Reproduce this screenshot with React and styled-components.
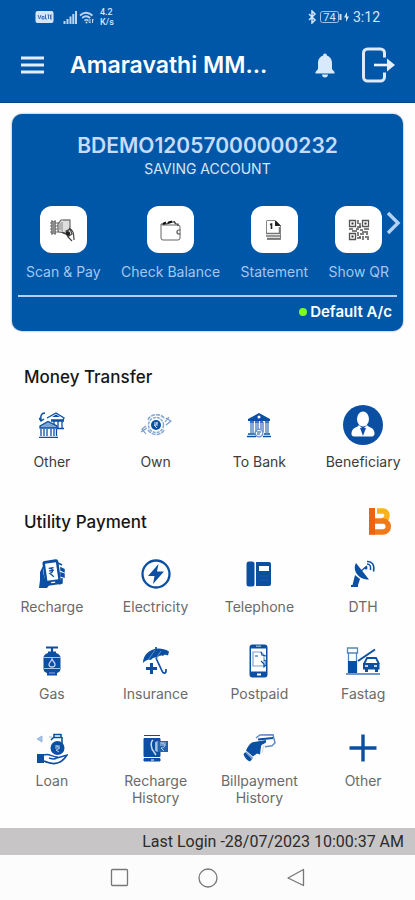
import React from "react";
import styled, { createGlobalStyle } from "styled-components";

const blue = "#0057a8";
const ink = "#0b4fa3";
const sans = `Inter, "Open Sans", sans-serif`;

const GlobalStyle = createGlobalStyle`
  * { box-sizing: border-box; }
  body { margin: 0; background: #fefefe; font-family: ${sans}; }
  button { font: inherit; color: inherit; background: none; border: 0; padding: 0; cursor: pointer; }
  svg { display: block; flex: none; }
`;

const Screen = styled.div`
  min-height: 100vh;
  display: flex;
  flex-direction: column;
`;

const TopArea = styled.header`
  background: ${blue};
  color: #fff;
  border-bottom: 1px solid #00448c;
`;

const StatusBar = styled.div`
  display: flex;
  align-items: center;
  justify-content: space-between;
  height: 34px;
  padding: 0 35px;
  font-family: Roboto, sans-serif;
  color: #d6e6fa;
`;

const StatusGroup = styled.div`
  display: flex;
  align-items: center;
  gap: ${(p) => p.$gap}px;
`;

const Speed = styled.span`
  font-size: 9px;
  line-height: 10px;
  font-weight: 500;
  margin-left: 4px;
`;

const Clock = styled.span`
  font-size: 14px;
  line-height: 16px;
`;

const AppBar = styled.div`
  display: flex;
  align-items: center;
  height: 68px;
  padding: 0 19px 6px 20px;
`;

const Title = styled.h1`
  flex: 1;
  margin: 0 0 0 25px;
  font-size: 23px;
  line-height: 28px;
  font-weight: 600;
  white-space: nowrap;
`;

const BarButton = styled.button`
  display: flex;
  margin-left: ${(p) => p.$gap || 0}px;
`;

const Main = styled.main`
  flex: 1;
  padding: 11px 0 20px;
`;

const Card = styled.section`
  margin: 0 12px;
  padding: 18px 6px 8px;
  border-radius: 10px;
  background: ${blue};
  color: #c5dcfa;
  box-shadow: 0 0 2px rgba(0, 50, 110, 0.6);
`;

const AccountNumber = styled.h2`
  margin: 0;
  text-align: center;
  font-size: 21px;
  line-height: 28px;
  font-weight: 600;
`;

const AccountType = styled.p`
  margin: 0;
  text-align: center;
  font-size: 14px;
  line-height: 18px;
  color: #d9e6fa;
`;

const ActionStrip = styled.div`
  position: relative;
  display: flex;
  justify-content: space-between;
  padding: 28px 8px 14px;
  border-bottom: 2px solid #b5d0f2;
`;

const Action = styled.button`
  display: flex;
  flex-direction: column;
  align-items: center;
  gap: 10px;
  font-size: 14px;
  line-height: 18px;
  white-space: nowrap;
  color: #a4c6f0;
`;

const ActionTile = styled.span`
  display: grid;
  place-items: center;
  width: 47px;
  height: 47px;
  border-radius: 12px;
  background: #fff;
`;

const NextButton = styled.button`
  position: absolute;
  right: -5px;
  top: 33px;
`;

const DefaultFlag = styled.p`
  display: flex;
  align-items: center;
  justify-content: flex-end;
  gap: 3px;
  margin: 4px 5px 0;
  font-size: 15px;
  line-height: 22px;
  font-weight: 600;
  color: #fff;
`;

const Dot = styled.span`
  width: 8px;
  height: 8px;
  border-radius: 50%;
  background: #7dff1c;
`;

const SectionHead = styled.div`
  display: flex;
  align-items: center;
  justify-content: space-between;
  height: 32px;
  padding: 0 23px 0 24px;
  margin-top: ${(p) => p.$top}px;
`;

const SectionTitle = styled.h3`
  margin: 0;
  font-size: 17px;
  line-height: 22px;
  font-weight: 500;
  color: #161616;
`;

const Grid = styled.div`
  display: grid;
  grid-template-columns: repeat(4, 1fr);
  row-gap: ${(p) => p.$rowGap}px;
  margin-top: ${(p) => p.$top}px;
`;

const Service = styled.button`
  display: flex;
  flex-direction: column;
  align-items: center;
  font-size: 14px;
  line-height: 17px;
  color: ${(p) => p.$color};
`;

const ServiceIcon = styled.span`
  display: grid;
  place-items: center;
  height: 40px;
  margin-bottom: ${(p) => p.$gap}px;
  color: ${ink};
`;

const LoginStrip = styled.footer`
  padding: 4px 11px 3px;
  background: #c7c5c6;
  color: #2b2b2b;
  text-align: right;
  font-family: Roboto, sans-serif;
  font-size: 16px;
  line-height: 20px;
`;

const NavBar = styled.nav`
  display: flex;
  justify-content: center;
  align-items: center;
  gap: 68px;
  height: 45px;
  background: #fcfcfc;
`;

const Svg = ({ w, h = w, children, ...rest }) => (
  <svg width={w} height={h} viewBox={`0 0 ${w} ${h}`} fill="none" aria-hidden="true" {...rest}>
    {children}
  </svg>
);

const VolteIcon = () => (
  <Svg w={19} h={12}>
    <rect x="0.5" width="18" height="12" rx="2" fill="#d6e6fa" />
    <path d="M3 4l1.5 4L6 4M7 5.5h2v2.5H7zM10.500 3.500v4.500h1.500M12.500 4h2M13.500 4v4M17 4h-1.500v4H17M15.500 6H17" stroke="#3f6fb4" />
  </Svg>
);
const SignalIcon = () => (
  <Svg w={14} h={13}>
    <path d="M1.500 10v3M4.500 8v5M7.500 5.500V13M10.300 3v10M13 0v13" stroke="#bdd5f3" strokeWidth="2" />
  </Svg>
);
const WifiIcon = () => (
  <Svg w={15} h={13}>
    <path d="M1 4.500Q7 -1 13.500 4.500M3.200 7Q7 3.500 11.200 7M5.500 9.500Q7.500 8 9.500 9.500" stroke="#bdd5f3" strokeWidth="1.700" />
    <path d="M11 8v4M9.500 10.500L11 12.200M13.500 12V8M15 9.500L13.500 8" stroke="#bdd5f3" />
    <circle cx="7.500" cy="11.500" r="1" fill="#bdd5f3" />
  </Svg>
);
const BluetoothIcon = () => (
  <Svg w={9} h={14}>
    <path d="M1 4l6 6-3 3V1l3 3-6 6" stroke="#d6e6fa" strokeWidth="1.500" />
  </Svg>
);
const BatteryIcon = () => (
  <Svg w={30} h={12}>
    <rect x="0.500" y="0.500" width="18" height="11" rx="2" stroke="#9fc0ea" />
    <path d="M20.500 3v6" stroke="#d6e6fa" strokeWidth="2" />
    <text x="9.500" y="10" textAnchor="middle" fontFamily="Roboto, sans-serif" fontSize="11" fill="#d6e6fa">74</text>
    <path d="M27 1l-3 5.500h2V11l3-5.500h-2z" fill="#d6e6fa" />
  </Svg>
);
const MenuIcon = () => (
  <Svg w={25} h={18}>
    <path d="M1 2h23M1 9h23M1 16h23" stroke="#e4eefb" strokeWidth="2.800" />
  </Svg>
);
const BellIcon = () => (
  <Svg w={22} h={26}>
    <path d="M11 1.500c1.200 0 1.800.8 1.800 2C16 4.500 18 7.500 18 11v6l2.500 3v1.500h-19V20L4 17v-6c0-3.500 2-6.500 5.200-7.500 0-1.200.6-2 1.800-2zM8 22.500h6c0 1.800-1.400 3-3 3s-3-1.200-3-3z" fill="#d8e9fb" />
  </Svg>
);
const LogoutIcon = () => (
  <Svg w={34} h={36}>
    <path d="M22.500 10.500V6a4 4 0 00-4-4h-13a4 4 0 00-4 4v24a4 4 0 004 4h13a4 4 0 004-4v-4.500" stroke="#dceafb" strokeWidth="3" />
    <path d="M12 18h15" stroke="#eef5fd" strokeWidth="2.600" />
    <path d="M25 11.500l8 6.500-8 6.500z" fill="#e6f0fc" />
  </Svg>
);
const ChevronIcon = () => (
  <Svg w={16} h={24}>
    <path d="M2 2l10 10L2 22" stroke="#b3d2f5" strokeWidth="3.400" />
  </Svg>
);

const ScanIcon = () => (
  <Svg w={26} h={24}>
    <path d="M1 3h5v13H1zM8 4v11" fill="#8c8c8c" stroke="#666" strokeDasharray="2 1" />
    <path d="M8 13V6l3-4h9v9l-4 4-7-1z" fill="#dedede" stroke="#666" strokeWidth="1.200" />
    <path d="M10 5v7M12 4v9M13 2h7" stroke="#888" />
    <path d="M12 14c3 3 6 1 6 5l4 4M19 10c4 2 5 5 5 12M16 13l4-2 2 5-3 2z" stroke="#444" strokeWidth="1.200" />
    <circle cx="18" cy="15.500" r="2.200" fill="#222" />
  </Svg>
);
const WalletIcon = () => (
  <Svg w={24} h={22}>
    <path d="M3 6h16a2 2 0 012 2v11a2 2 0 01-2 2H4a2 2 0 01-2-2V5" stroke="#666" />
    <path d="M2 5h6l2-2h5l2 2M15 2l2 3h2v2" stroke="#444" strokeWidth="1.200" />
    <path d="M4 5l3-1.500M9 4l4-1.500" stroke="#111" strokeWidth="2" />
    <path d="M21.500 11H20a2 2 0 000 4h1.500" stroke="#555" strokeWidth="1.200" />
  </Svg>
);
const StatementIcon = () => (
  <Svg w={18} h={22}>
    <path d="M1.500 1.500V14M2 1.500h8.500l5 5V20.500H2" stroke="#888" />
    <path d="M10 2v5h6L11 2z" fill="#222" />
    <path d="M5 5.500L6.500 5v5" stroke="#222" strokeWidth="1.600" />
    <path d="M14.500 8v7M1 14.500h14M1 17h15M2 19.500h14" stroke="#777" strokeWidth="1.500" />
  </Svg>
);
const QrIcon = () => (
  <Svg w={22}>
    <path d="M1.500 1.500h6v6h-6zM14.500 1.500h6v6h-6zM1.500 14.500h6v6h-6z" stroke="#555" strokeWidth="1.300" />
    <path d="M3.500 3.500h2v2h-2zM16.500 3.500h2v2h-2zM3.500 16.500h2v2h-2z" fill="#333" />
    <path d="M10 1v4M12 4v5M9 8h4M1 10h4M4 12h5M8 10h3M12 11h3M16 10h5M14 13h4M19 12v4M10 13v4M12 15h4M9 19h4M15 17v4M17 18h4M19 20h2M12 17v2" stroke="#555" strokeWidth="1.500" />
  </Svg>
);

const OtherBankIcon = () => (
  <Svg w={26}>
    <path d="M8 6l9-5 8 5-1 2H12M12 9h13M15 8v6M19 8v8M23 8v8M18 16.500h7" stroke={ink} strokeWidth="1.300" />
    <path d="M13 5l4-2.500L21 5z" fill={ink} />
    <path d="M1 14l8-4.500 9 4.500v2H1zM2 17v7M5 17v7M8 17v7M12 17v7M15 17v7M17.500 17v7M0 25.300h19" stroke={ink} strokeWidth="1.300" fill="#7ea5d5" />
    <path d="M6 1C2 1 1.500 4 2 8M0 6l2 3 3-2" stroke={ink} strokeWidth="1.500" />
  </Svg>
);
const OwnIcon = () => (
  <Svg w={32} h={22}>
    <circle cx="16" cy="11" r="5" fill={ink} />
    <circle cx="16" cy="11" r="7.500" stroke="#86a9d8" strokeWidth="1.500" strokeDasharray="3 1" />
    <path d="M8 6c3-7 13-7 17-1M8 16c4 6 13 6 16 0" stroke="#86a9d8" strokeWidth="1.600" strokeDasharray="4 1" />
    <path d="M26 4l5 3-5 4M29 3l-4 5M6 12l-4 3 4 5M7 14l-6 4" stroke="#7599cc" strokeWidth="1.200" />
    <path d="M14 9h4M14 11h4M17 8c0 4-3 3-3 3l3 3" stroke="#cfe0f5" />
  </Svg>
);
const BankIcon = () => (
  <Svg w={24} h={26}>
    <path d="M1 7l11-6 11 6v2H1z" fill={ink} />
    <circle cx="12" cy="5" r="1.500" fill="#fff" />
    <path d="M3 10h4M8 10h4M13 10h3M18 10h4" stroke={ink} strokeWidth="1.500" />
    <path d="M4 10v11M6 10v11M9 10v10M11 10v7M14 10v7M16 10v10M19 10v11M21 10v11" stroke="#376eb5" strokeWidth="1.200" />
    <path d="M1 22h7M17 22h6M0 24.500h9M16 24.500h8" stroke={ink} strokeWidth="1.500" />
    <circle cx="12" cy="21" r="3.800" stroke="#6b97cf" strokeWidth="1.500" />
    <path d="M10 20h4M10 22h3" stroke={ink} />
  </Svg>
);
const BeneficiaryIcon = () => (
  <Svg w={40}>
    <circle cx="20" cy="20" r="20" fill={ink} />
    <ellipse cx="20" cy="14" rx="6" ry="7.500" fill="#fff" />
    <path d="M16 20l4 4 4-4c2 3 7 2 7.500 8 .2 2-1 3.500-2.500 3.500H11c-1.500 0-3-1.500-2.500-3.500.8-6 5.500-5 7.500-8z" fill="#fff" />
    <path d="M17 23h6l-1 2.500L20 31l-2-5.500z" fill={ink} />
  </Svg>
);
const RechargeIcon = () => (
  <Svg w={28} h={32}>
    <g transform="rotate(-8 14 16)">
      <rect x="6" y="2" width="16" height="25" rx="2.500" fill={ink} />
      <path d="M8.500 5h11v17h-11z" fill="#fff" />
      <path d="M11.500 10h5M11.500 12.500h5M12 10c4 0 4 5 0 5l3.500 4" stroke={ink} strokeWidth="1.200" />
      <path d="M12 24.500h4" stroke="#fff" strokeWidth="1.300" />
    </g>
    <path d="M5 8L2 14v8l-1 8h8l3-4c-4-2-7-6-7-18z" fill={ink} />
    <path d="M20 5l4 2M23 10l3 1.500v2L23 12zM23 15l3 1v3l-3-1zM24 20v5l-3 1" stroke={ink} strokeWidth="1.500" fill={ink} />
  </Svg>
);
const ElectricityIcon = () => (
  <Svg w={30}>
    <circle cx="15" cy="15" r="13.500" stroke={ink} strokeWidth="2.300" />
    <path d="M17.500 5L7 17h6.500L12 25l11-12.500h-7z" fill={ink} />
  </Svg>
);
const TelephoneIcon = () => (
  <Svg w={26}>
    <rect x="0.500" y="0.500" width="8" height="25" rx="2.500" fill={ink} />
    <path d="M10 1h13a2 2 0 012 2v20a2 2 0 01-2 2H10z" fill={ink} />
    <path d="M13 5h10v5H13z" fill="#fff" />
    <path d="M14 15h8M14 19h8" stroke="#1c5dac" strokeDasharray="2 1" />
  </Svg>
);
const DishIcon = () => (
  <Svg w={26} h={28}>
    <path d="M6 3C2 10 8 20 19 19.500z" fill={ink} />
    <path d="M11 11l6-5" stroke={ink} strokeWidth="1.300" />
    <circle cx="16" cy="8" r="1.500" fill={ink} />
    <path d="M17 4c3 0 4 2 3.500 6M17 1.500c5-.5 8 3.500 6.500 10" stroke={ink} strokeWidth="1.500" />
    <path d="M5 15l5 4-2 6v2H1v-2h1.500z" fill={ink} />
  </Svg>
);
const GasIcon = () => (
  <Svg w={18} h={30}>
    <path d="M3 1.500h12M9 1v5M5 6.500h8" stroke={ink} strokeWidth="2.200" />
    <path d="M5 7h8c3 1 4.500 2.500 4.500 5v11c0 2-1 3-3.500 4v2.500H4V27C1.500 26 .5 25 .5 23V12C.5 9.500 2 8 5 7z" fill={ink} />
    <path d="M1 11.500h16M1 22.500h16" stroke="#a9c5e8" />
    <path d="M9 13c1 3 3 3 3 5.500S10 21 9 21s-3-.5-3-2.500S8 16 9 13z" stroke="#bcd4f0" strokeWidth="1.300" />
    <path d="M6 27h6" stroke="#8fb2dc" />
  </Svg>
);
const InsuranceIcon = () => (
  <Svg w={28} h={30}>
    <path d="M1 17C1 6 14-2 27 5.500l-1 4c-2-1-4-1-5 .5-2-1-5 0-6 2-2-1-5 0-6 2-3-1-6 .5-8 3z" fill={ink} />
    <path d="M14 1v3M14 12l6 13c1 3 4 2.500 4 0v-2" stroke={ink} strokeWidth="1.700" />
    <path d="M6 14L13 4M15 11L19 5" stroke="#759dcd" strokeWidth="0.800" />
    <path d="M9.500 17v11M4 22.500h11" stroke={ink} strokeWidth="3" />
  </Svg>
);
const PostpaidIcon = () => (
  <Svg w={20} h={34}>
    <rect x="0.500" y="0.500" width="18" height="33" rx="3" fill={ink} />
    <path d="M2 4.500h15v23H2z" fill="#fff" />
    <path d="M7 2.200h5" stroke="#bdd3ee" />
    <path d="M4 8h8l3 3v11H4z" stroke="#7ca1d0" strokeWidth="1.200" />
    <path d="M12 8l1 3 4 1M6 12h3M12 17l3 3v3l2-2v-4l-2-1" stroke={ink} strokeWidth="1.100" />
    <path d="M8 30.500h4" stroke="#fff" strokeWidth="2" />
  </Svg>
);
const FastagIcon = () => (
  <Svg w={34} h={30}>
    <path d="M1.500 2h10v5h-10zM2.500 6v22h8V6" stroke="#5787c1" strokeWidth="1.300" />
    <path d="M2 15h9v13H2z" fill={ink} />
    <path d="M12 15L29 3.500" stroke={ink} strokeWidth="2" />
    <path d="M18 18l3-6h9l3 6" stroke={ink} strokeWidth="1.800" />
    <path d="M17 17h16.500v6.500H32V26h-3v-2.500h-7V26h-3v-2.500h-2z" fill={ink} />
    <path d="M19 20h3M28 20h3" stroke="#fff" strokeWidth="1.500" />
    <path d="M0 28h34" stroke="#6e98cb" strokeWidth="2" />
  </Svg>
);
const LoanIcon = () => (
  <Svg w={32} h={34}>
    <circle cx="21.500" cy="17" r="7" fill={ink} />
    <path d="M18 3.500h7v3h-7zM26 6v8M15 9l3-3" stroke={ink} strokeWidth="1.600" />
    <path d="M19 15h5M19 17h5M20 15c4 0 4 4 0 4l3 2" stroke="#b3ceec" />
    <path d="M1 8l5-3v6zM13 6h3" stroke="#98b6dc" fill="#a9c2e2" />
    <path d="M1 23h7v9H1z" fill={ink} />
    <path d="M8 24c5-2 8 2 13 2-1 3-5 2-8 1M21 27l10-3c-5 8-13 11-23 6" stroke={ink} strokeWidth="1.500" />
  </Svg>
);
const RechargeHistoryIcon = () => (
  <Svg w={26} h={28}>
    <path d="M1 1.500h16M1 4.500h16v18H1zM1 24.500h16V27H1z" fill={ink} stroke={ink} />
    <path d="M1 3.200h16M1 23.500h16" stroke="#fff" />
    <path d="M10 6c-3 2-2 9 1 12l2 3M13 8v9" stroke="#c5d9f0" strokeWidth="1.500" />
    <rect x="14" y="7" width="11" height="11" fill="#2464ae" />
    <path d="M17 9h6M17 11h6M18 9c5 0 5 5 0 5l3 3M14 7v11" stroke="#b3ceec" />
    <path d="M8 26h3" stroke="#fff" />
  </Svg>
);
const BillHistoryIcon = () => (
  <Svg w={34} h={28}>
    <path d="M14 4l4-3 13-.2 2 8-3 3-7 1" fill="#fff" stroke="#5e8bc5" strokeWidth="1.500" />
    <path d="M16 5.500l15-1.500" stroke={ink} strokeWidth="1.800" />
    <path d="M12 8l12-2v2.500c-3 2-5 2-5 4l-1 8-3-1-4 3-7-6c2-4 4-8 8-8.500z" fill={ink} />
    <path d="M1.500 20L4 17.500 11 24l-3 3.500c-3-1-5-3-6.500-7.500z" fill={ink} />
    <path d="M3.500 18l7 7M20 19l2-8" stroke="#c8dbf2" />
  </Svg>
);
const PlusIcon = () => (
  <Svg w={28}>
    <path d="M14 .500v27M.500 14h27" stroke={ink} strokeWidth="3.400" />
  </Svg>
);
const BharatLogo = () => (
  <svg width="23" height="28" viewBox="0 0 23 28" role="img" aria-label="Bharat BillPay">
    <path d="M8 3h6a4 4 0 014 4.500c0 3-2 5-5 5" fill="none" stroke="#fbb21f" strokeWidth="5.500" />
    <path d="M5 13h9c7 0 7 11 0 11H5" fill="none" stroke="#f07a18" strokeWidth="5.500" />
    <path d="M0 0h6v26.800H0z" fill="#ec6413" />
  </svg>
);

const actions = [
  ["Scan & Pay", ScanIcon],
  ["Check Balance", WalletIcon],
  ["Statement", StatementIcon],
  ["Show QR", QrIcon],
];

const transfers = [
  ["Other", OtherBankIcon],
  ["Own", OwnIcon],
  ["To Bank", BankIcon],
  ["Beneficiary", BeneficiaryIcon],
];

const utilities = [
  ["Recharge", RechargeIcon],
  ["Electricity", ElectricityIcon],
  ["Telephone", TelephoneIcon],
  ["DTH", DishIcon],
  ["Gas", GasIcon],
  ["Insurance", InsuranceIcon],
  ["Postpaid", PostpaidIcon],
  ["Fastag", FastagIcon],
  ["Loan", LoanIcon],
  ["Recharge History", RechargeHistoryIcon],
  ["Billpayment History", BillHistoryIcon],
  ["Other", PlusIcon],
];

const ServiceGrid = ({ items, top, rowGap, iconGap, color }) => (
  <Grid $top={top} $rowGap={rowGap}>
    {items.map(([label, Icon]) => (
      <Service key={label} $color={color}>
        <ServiceIcon $gap={iconGap}>
          <Icon />
        </ServiceIcon>
        {label}
      </Service>
    ))}
  </Grid>
);

export default function App() {
  return (
    <Screen>
      <GlobalStyle />
      <TopArea>
        <StatusBar>
          <StatusGroup $gap={9}>
            <VolteIcon />
            <StatusGroup $gap={2}>
              <SignalIcon />
              <WifiIcon />
              <Speed>4.2<br />K/s</Speed>
            </StatusGroup>
          </StatusGroup>
          <StatusGroup $gap={3}>
            <BluetoothIcon />
            <BatteryIcon />
            <Clock>3:12</Clock>
          </StatusGroup>
        </StatusBar>
        <AppBar>
          <BarButton aria-label="Menu"><MenuIcon /></BarButton>
          <Title>Amaravathi MM...</Title>
          <BarButton aria-label="Notifications"><BellIcon /></BarButton>
          <BarButton aria-label="Log out" $gap={26}><LogoutIcon /></BarButton>
        </AppBar>
      </TopArea>
      <Main>
        <Card>
          <AccountNumber>BDEMO12057000000232</AccountNumber>
          <AccountType>SAVING ACCOUNT</AccountType>
          <ActionStrip>
            {actions.map(([label, Icon]) => (
              <Action key={label}>
                <ActionTile><Icon /></ActionTile>
                {label}
              </Action>
            ))}
            <NextButton aria-label="More actions"><ChevronIcon /></NextButton>
          </ActionStrip>
          <DefaultFlag><Dot />Default A/c</DefaultFlag>
        </Card>
        <SectionHead $top={30}>
          <SectionTitle>Money Transfer</SectionTitle>
        </SectionHead>
        <ServiceGrid items={transfers} top={12} rowGap={0} iconGap={8} color="#3c3c3c" />
        <SectionHead $top={36}>
          <SectionTitle>Utility Payment</SectionTitle>
          <BharatLogo />
        </SectionHead>
        <ServiceGrid items={utilities} top={16} rowGap={26} iconGap={4} color="#6a6a6a" />
      </Main>
      <LoginStrip>Last Login -28/07/2023 10:00:37 AM</LoginStrip>
      <NavBar>
        <button aria-label="Recent apps">
          <Svg w={20}><rect x="1.500" y="1.500" width="16" height="16" rx="1" stroke="#777" strokeWidth="1.300" /></Svg>
        </button>
        <button aria-label="Home">
          <Svg w={20}><circle cx="10" cy="10" r="9" stroke="#777" strokeWidth="1.300" /></Svg>
        </button>
        <button aria-label="Back">
          <Svg w={20}><path d="M17.500 1.500v16L2 10z" stroke="#777" strokeWidth="1.300" strokeLinejoin="round" /></Svg>
        </button>
      </NavBar>
    </Screen>
  );
}
